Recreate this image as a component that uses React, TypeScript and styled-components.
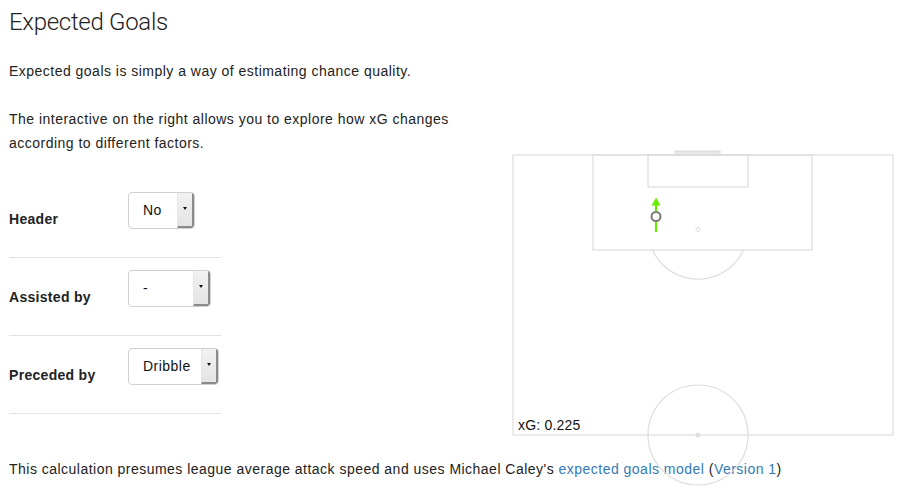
import React from 'react';
import styled, { createGlobalStyle } from 'styled-components';

const GlobalStyle = createGlobalStyle`
  html, body {
    margin: 0;
    padding: 0;
    background: #fff;
  }
  body {
    font-family: "Liberation Sans", Arial, sans-serif;
    font-size: 14px;
    letter-spacing: 0.48px;
    color: #222;
  }
`;

const Page = styled.div`
  width: 908px;
  height: 488px;
  padding: 0 9px;
  box-sizing: border-box;
  overflow: hidden;
`;

const Title = styled.h1`
  margin: 9px 0 0;
  font-family: Roboto, "Liberation Sans", sans-serif;
  font-size: 24px;
  line-height: 26px;
  font-weight: 300;
  letter-spacing: -0.3px;
  color: #222;
`;

const Columns = styled.div`
  display: grid;
  grid-template-columns: 490px 1fr;
`;

const Intro = styled.p`
  margin: 24px 0 0;
  line-height: 24px;
`;

const Form = styled.div`
  margin-top: 26px;
  width: 212px;
`;

const FormRow = styled.div`
  display: flex;
  align-items: flex-start;
  height: 77px;
  padding-top: 11px;
  box-sizing: border-box;
  border-bottom: 1px solid #e2e2e2;
  margin-bottom: 1px;
`;

const Label = styled.label`
  width: 119px;
  margin-top: 17px;
  font-weight: 700;
  line-height: 20px;
  letter-spacing: 0.3px;
`;

const Select = styled.div<{ $width: number }>`
  position: relative;
  width: ${(p) => p.$width}px;
  height: 37px;
  box-sizing: border-box;
  border: 1px solid #d0d0d0;
  border-radius: 4px;
  background: #fff;
  display: flex;
  align-items: center;
  padding-left: 14px;
  font-size: 14px;
  color: #111;
  overflow: hidden;
`;

const SelectValue = styled.span`
  flex: 1;
  margin-top: -1px;
`;

const SelectHandle = styled.span`
  align-self: stretch;
  width: 14px;
  background: linear-gradient(#f2f2f2, #e4e4e4);
  border-left: 1px solid #e6e6e6;
  border-right: 2px solid #8a8a8a;
  border-bottom: 2px solid #8a8a8a;
  border-bottom-right-radius: 3px;
  display: flex;
  align-items: center;
  justify-content: center;
  margin-top: -1px;
`;

const Caret = styled.span`
  width: 0;
  height: 0;
  border-left: 2.5px solid transparent;
  border-right: 2.5px solid transparent;
  border-top: 3px solid #111;
  margin-top: -2px;
`;

const PitchColumn = styled.div`
  padding-top: 115px;
  padding-left: 13px;
`;

const PitchWrap = styled.div`
  position: relative;
  width: 382px;
  height: 287px;
`;

const PitchSvg = styled.svg`
  display: block;
  overflow: visible;
`;

const XgLabel = styled.div`
  position: absolute;
  left: 6px;
  top: 267px;
  font-size: 14px;
  letter-spacing: 0.2px;
  color: #111;
`;

const Footer = styled.p`
  margin: 22px 0 0;
  line-height: 20px;
`;

const Link = styled.a`
  color: #337ab7;
  text-decoration: none;
`;

const rows = [
  { label: 'Header', value: 'No', width: 67 },
  { label: 'Assisted by', value: '-', width: 83 },
  { label: 'Preceded by', value: 'Dribble', width: 91 },
];

const Pitch = () => {
  const line = '#dcdcdc';
  return (
    <PitchSvg width={382} height={287} viewBox="-1 -5 382 287">
      <rect x={162} y={-4} width={45} height={4} fill="#e8e8e8" stroke="#d8d8d8" strokeWidth={1} />
      <rect x={0} y={0} width={380} height={280} fill="none" stroke={line} strokeWidth={1.2} />
      <rect x={80} y={0} width={219} height={95} fill="none" stroke={line} strokeWidth={1.2} />
      <rect x={135} y={0} width={100} height={32} fill="none" stroke={line} strokeWidth={1.2} />
      <circle cx={185} cy={74.5} r={2} fill="none" stroke={line} strokeWidth={1} />
      <path d="M 139.5 95 A 50 50 0 0 0 230.5 95" fill="none" stroke={line} strokeWidth={1.2} />
      <circle cx={185} cy={280} r={50} fill="none" stroke={line} strokeWidth={1.2} />
      <circle cx={185} cy={280} r={2} fill="#e4e4e4" stroke={line} strokeWidth={1} />
      <line x1={143} y1={77} x2={143} y2={50} stroke="#66ee00" strokeWidth={2.2} />
      <polygon points="143,42.5 138.5,50.5 147.5,50.5" fill="#66ee00" />
      <circle cx={143} cy={61.5} r={4.5} fill="#fff" stroke="#7a7a7a" strokeWidth={2} />
    </PitchSvg>
  );
};

export default function App() {
  return (
    <Page>
      <GlobalStyle />
      <Title>Expected Goals</Title>
      <Columns>
        <div>
          <Intro>Expected goals is simply a way of estimating chance quality.</Intro>
          <Intro>
            The interactive on the right allows you to explore how xG changes
            <br />
            according to different factors.
          </Intro>
          <Form>
            {rows.map((r) => (
              <FormRow key={r.label}>
                <Label>{r.label}</Label>
                <Select $width={r.width}>
                  <SelectValue>{r.value}</SelectValue>
                  <SelectHandle>
                    <Caret />
                  </SelectHandle>
                </Select>
              </FormRow>
            ))}
          </Form>
        </div>
        <PitchColumn>
          <PitchWrap>
            <Pitch />
            <XgLabel>xG: 0.225</XgLabel>
          </PitchWrap>
        </PitchColumn>
      </Columns>
      <Footer>
        This calculation presumes league average attack speed and uses Michael Caley's{' '}
        <Link href="#">expected goals model</Link> (<Link href="#">Version 1</Link>)
      </Footer>
    </Page>
  );
}
